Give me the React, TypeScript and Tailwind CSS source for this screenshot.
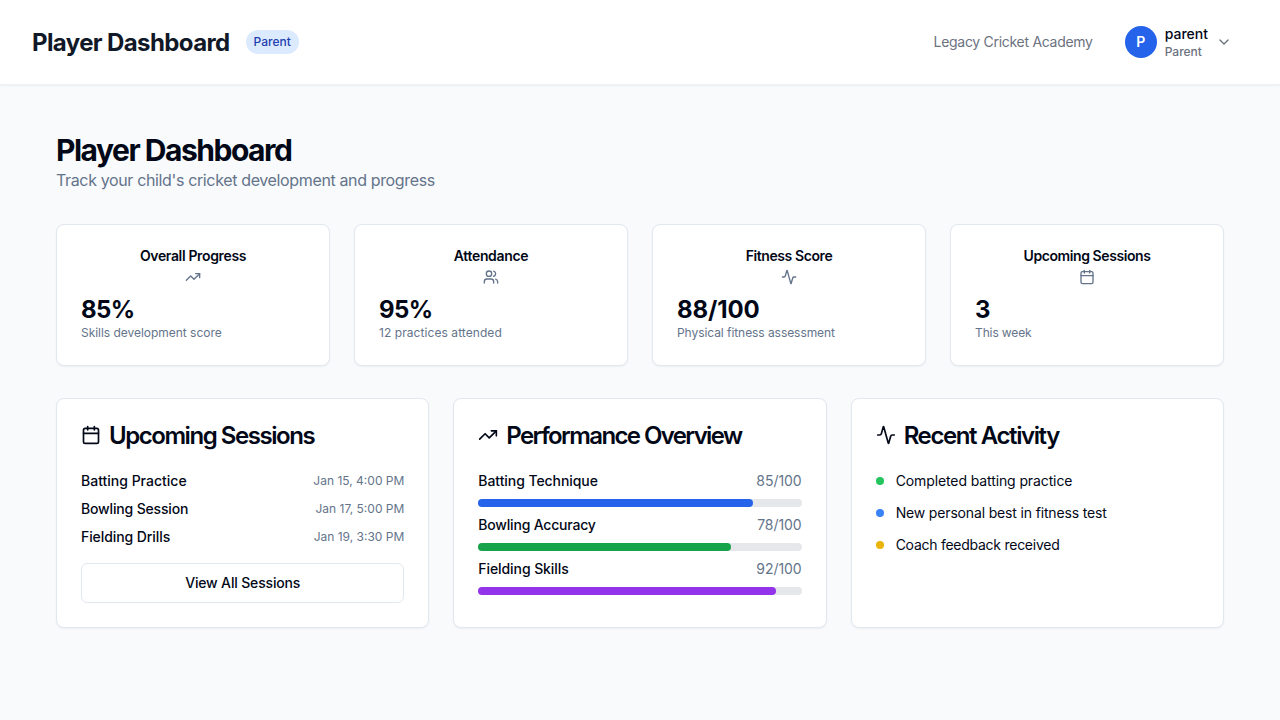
import React from "react";
import { Activity, Calendar, ChevronDown, TrendingUp, Users } from "lucide-react";

const stats = [
  { title: "Overall Progress", Icon: TrendingUp, value: "85%", note: "Skills development score", titleGap: "tracking-[-0.35px]", valueGap: "tracking-[-0.6px]", noteGap: "tracking-[-0.03px]" },
  { title: "Attendance", Icon: Users, value: "95%", note: "12 practices attended", titleGap: "tracking-[-0.35px]", valueGap: "tracking-[-0.6px]", noteGap: "tracking-[0.07px]" },
  { title: "Fitness Score", Icon: Activity, value: "88/100", note: "Physical fitness assessment", titleGap: "tracking-[-0.4px]", valueGap: "tracking-[-0.1px]", noteGap: "tracking-[-0.06px]" },
  { title: "Upcoming Sessions", Icon: Calendar, value: "3", note: "This week", titleGap: "tracking-[-0.42px]", valueGap: "tracking-normal", noteGap: "tracking-[-0.12px]" },
];

const sessions = [
  { name: "Batting Practice", time: "Jan 15, 4:00 PM", gap: "tracking-normal" },
  { name: "Bowling Session", time: "Jan 17, 5:00 PM", gap: "tracking-[-0.16px]" },
  { name: "Fielding Drills", time: "Jan 19, 3:30 PM", gap: "tracking-[-0.08px]" },
];

const skills = [
  { name: "Batting Technique", score: 85, color: "bg-[#2563eb]", gap: "tracking-[-0.07px]" },
  { name: "Bowling Accuracy", score: 78, color: "bg-[#16a34a]", gap: "tracking-[-0.2px]" },
  { name: "Fielding Skills", score: 92, color: "bg-[#9333ea]", gap: "tracking-[-0.08px]" },
];

const activity = [
  { text: "Completed batting practice", color: "bg-[#22c55e]", gap: "tracking-[-0.11px]" },
  { text: "New personal best in fitness test", color: "bg-[#3b82f6]", gap: "tracking-[-0.16px]" },
  { text: "Coach feedback received", color: "bg-[#eab308]", gap: "tracking-[-0.26px]" },
];

const card = "rounded-lg border border-[#e2e8f0] bg-white shadow-[0_1px_2px_0_rgba(0,0,0,0.05)]";
const cardTitle = "flex h-6 items-center gap-2 text-2xl leading-6 font-semibold";

export default function App() {
  return (
    <div className="min-h-screen bg-[#f9fafb] font-['Inter',sans-serif] text-[#020817]">
      <header className="flex h-[85px] items-center justify-between border-b border-[#f0f1f3] bg-white px-8 shadow-[0_1px_2px_0_rgba(0,0,0,0.05)]">
        <div className="flex items-center gap-4">
          <h1 className="pt-0.5 text-2xl font-bold tracking-[-0.61px] text-[#111827]">Player Dashboard</h1>
          <span className="rounded-full bg-[#dbeafe] px-2 py-1 text-xs font-medium text-[#1e40af]">Parent</span>
        </div>
        <div className="flex items-center gap-4">
          <span className="text-sm tracking-[-0.29px] text-[#6b7280]">Legacy Cricket Academy</span>
          <button className="flex items-center gap-2 px-4">
            <span className="flex size-8 items-center justify-center rounded-full bg-[#2563eb] text-sm font-semibold text-white">P</span>
            <span className="block text-left">
              <span className="block text-sm font-medium">parent</span>
              <span className="block text-xs font-medium text-[#6b7280]">Parent</span>
            </span>
            <ChevronDown className="size-4 text-[#6b7280]" />
          </button>
        </div>
      </header>

      <main className="px-14 pt-[47px]">
        <h2 className="text-3xl leading-9 font-bold tracking-[-1.48px]">Player Dashboard</h2>
        <p className="text-base tracking-[-0.36px] text-[#64748b]">Track your child's cricket development and progress</p>

        <div className="mt-8 grid grid-cols-4 gap-6">
          {stats.map(({ title, Icon, value, note, titleGap, valueGap, noteGap }) => (
            <section key={title} className={`${card} h-[142px] p-6`}>
              <div className="flex flex-col items-center">
                <h3 className={`text-sm leading-[14px] font-semibold ${titleGap}`}>{title}</h3>
                <Icon className="mt-1.5 size-4 text-[#64748b]" />
              </div>
              <div className={`mt-[9px] -mb-px text-2xl font-bold ${valueGap}`}>{value}</div>
              <p className={`text-xs text-[#64748b] ${noteGap}`}>{note}</p>
            </section>
          ))}
        </div>

        <div className="mt-8 grid grid-cols-3 gap-6">
          <section className={`${card} h-[230px] p-6`}>
            <h3 className={cardTitle}>
              <Calendar className="size-5" />
              <span className="pt-0.5 tracking-[-1.45px]">Upcoming Sessions</span>
            </h3>
            <div className="mt-6 space-y-2">
              {sessions.map((s) => (
                <div key={s.name} className="flex items-center justify-between">
                  <span className={`text-sm font-medium ${s.gap}`}>{s.name}</span>
                  <span className="text-xs text-[#64748b]">{s.time}</span>
                </div>
              ))}
            </div>
            <button className="mt-4 h-10 w-full rounded-md border border-[#e2e8f0] bg-white text-sm font-medium tracking-[-0.16px]">
              View All Sessions
            </button>
          </section>

          <section className={`${card} h-[230px] p-6`}>
            <h3 className={cardTitle}>
              <TrendingUp className="size-5" />
              <span className="pt-0.5 tracking-[-1.61px]">Performance Overview</span>
            </h3>
            <div className="mt-6 space-y-2">
              {skills.map((s) => (
                <div key={s.name}>
                  <div className="flex items-center justify-between text-sm">
                    <span className={`font-medium ${s.gap}`}>{s.name}</span>
                    <span className="tracking-[-0.05px] text-[#64748b]">{s.score}/100</span>
                  </div>
                  <div className="mt-2 h-2 w-full rounded-full bg-[#e5e7eb]">
                    <div className={`h-2 rounded-full ${s.color}`} style={{ width: `${s.score}%` }} />
                  </div>
                </div>
              ))}
            </div>
          </section>

          <section className={`${card} h-[230px] p-6`}>
            <h3 className={cardTitle}>
              <Activity className="size-5" />
              <span className="pt-0.5 tracking-[-1.4px]">Recent Activity</span>
            </h3>
            <div className="mt-6 space-y-3">
              {activity.map((a) => (
                <div key={a.text} className="flex items-center gap-3">
                  <span className={`size-2 rounded-full ${a.color}`} />
                  <span className={`text-sm ${a.gap}`}>{a.text}</span>
                </div>
              ))}
            </div>
          </section>
        </div>
      </main>
    </div>
  );
}
